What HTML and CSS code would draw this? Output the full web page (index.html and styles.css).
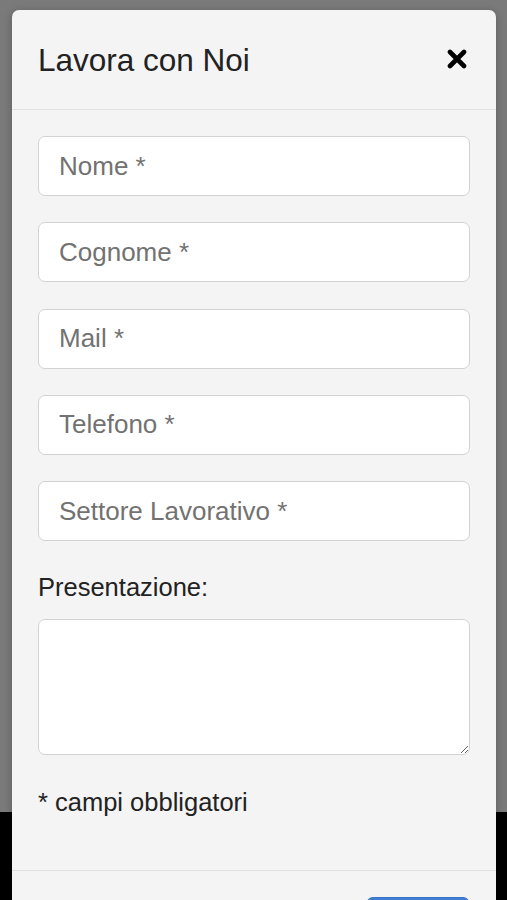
FILE: index.html
```html
<!DOCTYPE html>
<html lang="it">
<head>
<meta charset="utf-8">
<title>Lavora con Noi</title>
<link rel="stylesheet" href="styles.css">
</head>
<body>
<div class="backdrop">
  <div class="modal">
    <div class="modal-header">
      <h4 class="modal-title">Lavora con Noi</h4>
      <button class="close" type="button" aria-label="Chiudi">
        <svg width="20" height="20" viewBox="0 0 20 20"><path d="M3 3 L17 17 M17 3 L3 17" stroke="#000" stroke-width="4.6" stroke-linecap="round" fill="none"/></svg>
      </button>
    </div>
    <div class="modal-body">
      <div class="form-group"><input class="form-control" type="text" placeholder="Nome *"></div>
      <div class="form-group"><input class="form-control" type="text" placeholder="Cognome *"></div>
      <div class="form-group"><input class="form-control" type="text" placeholder="Mail *"></div>
      <div class="form-group"><input class="form-control" type="text" placeholder="Telefono *"></div>
      <div class="form-group"><input class="form-control" type="text" placeholder="Settore Lavorativo *"></div>
      <div class="form-group">
        <label class="label">Presentazione:</label>
        <textarea class="form-control textarea"></textarea>
      </div>
      <p class="note">* campi obbligatori</p>
    </div>
    <div class="modal-footer">
      <button class="btn-primary" type="button">Invia</button>
    </div>
  </div>
</div>
</body>
</html>
```

FILE: styles.css
```css
html, body {
  margin: 0;
  padding: 0;
  height: 900px;
  overflow: hidden;
}
body {
  background: linear-gradient(#7a7a7a 0, #7a7a7a 812px, #000 812px, #000 100%);
  font-family: "Liberation Sans", Arial, sans-serif;
  color: #262626;
}
.backdrop {
  padding-top: 10px;
}
.modal {
  margin-left: 12px;
  width: 484px;
  background: #f4f4f4;
  border-radius: 7px;
  box-shadow: 0 2px 8px rgba(0,0,0,0.25);
}
.modal-header {
  display: flex;
  align-items: center;
  justify-content: space-between;
  padding: 26px 26px;
  height: 47px;
  border-bottom: 1px solid #e0e0e0;
}
.modal-title {
  margin: 0;
  font-size: 31.5px;
  font-weight: normal;
  line-height: 46px;
  color: #222;
}
.close {
  background: none;
  border: 0;
  padding: 0;
  margin: 0 3px 2px 0;
  width: 20px;
  height: 20px;
  display: flex;
}
.modal-body {
  padding: 26px 26px 0 26px;
}
.form-group {
  margin-bottom: 26.3px;
}
.form-control {
  display: block;
  box-sizing: border-box;
  width: 432px;
  height: 60px;
  margin: 0;
  padding: 0 20px;
  font-family: "Liberation Sans", Arial, sans-serif;
  font-size: 26px;
  color: #333;
  background: #fff;
  border: 1.5px solid #d2d2d2;
  border-radius: 7px;
  outline: none;
}
.form-control::placeholder {
  color: #727272;
}
.label {
  display: block;
  font-size: 25.5px;
  line-height: 36px;
  padding-top: 2px;
  margin: 0 0 14px 0;
  color: #222;
}
.textarea {
  height: 136px;
  resize: vertical;
}
.note {
  margin: 0;
  padding: 2px 0 50px 0;
  font-size: 25.5px;
  line-height: 36px;
  color: #222;
}
.modal-footer {
  display: flex;
  justify-content: flex-end;
  padding: 26px 26px;
  border-top: 1px solid #e0e0e0;
}
.btn-primary {
  width: 104px;
  height: 60px;
  padding: 30px 0 0 0;
  background: #3e7fd6;
  color: #fff;
  border: 1px solid #3a74c4;
  border-radius: 7px;
  font-family: "Liberation Sans", Arial, sans-serif;
  font-size: 25px;
}
```
